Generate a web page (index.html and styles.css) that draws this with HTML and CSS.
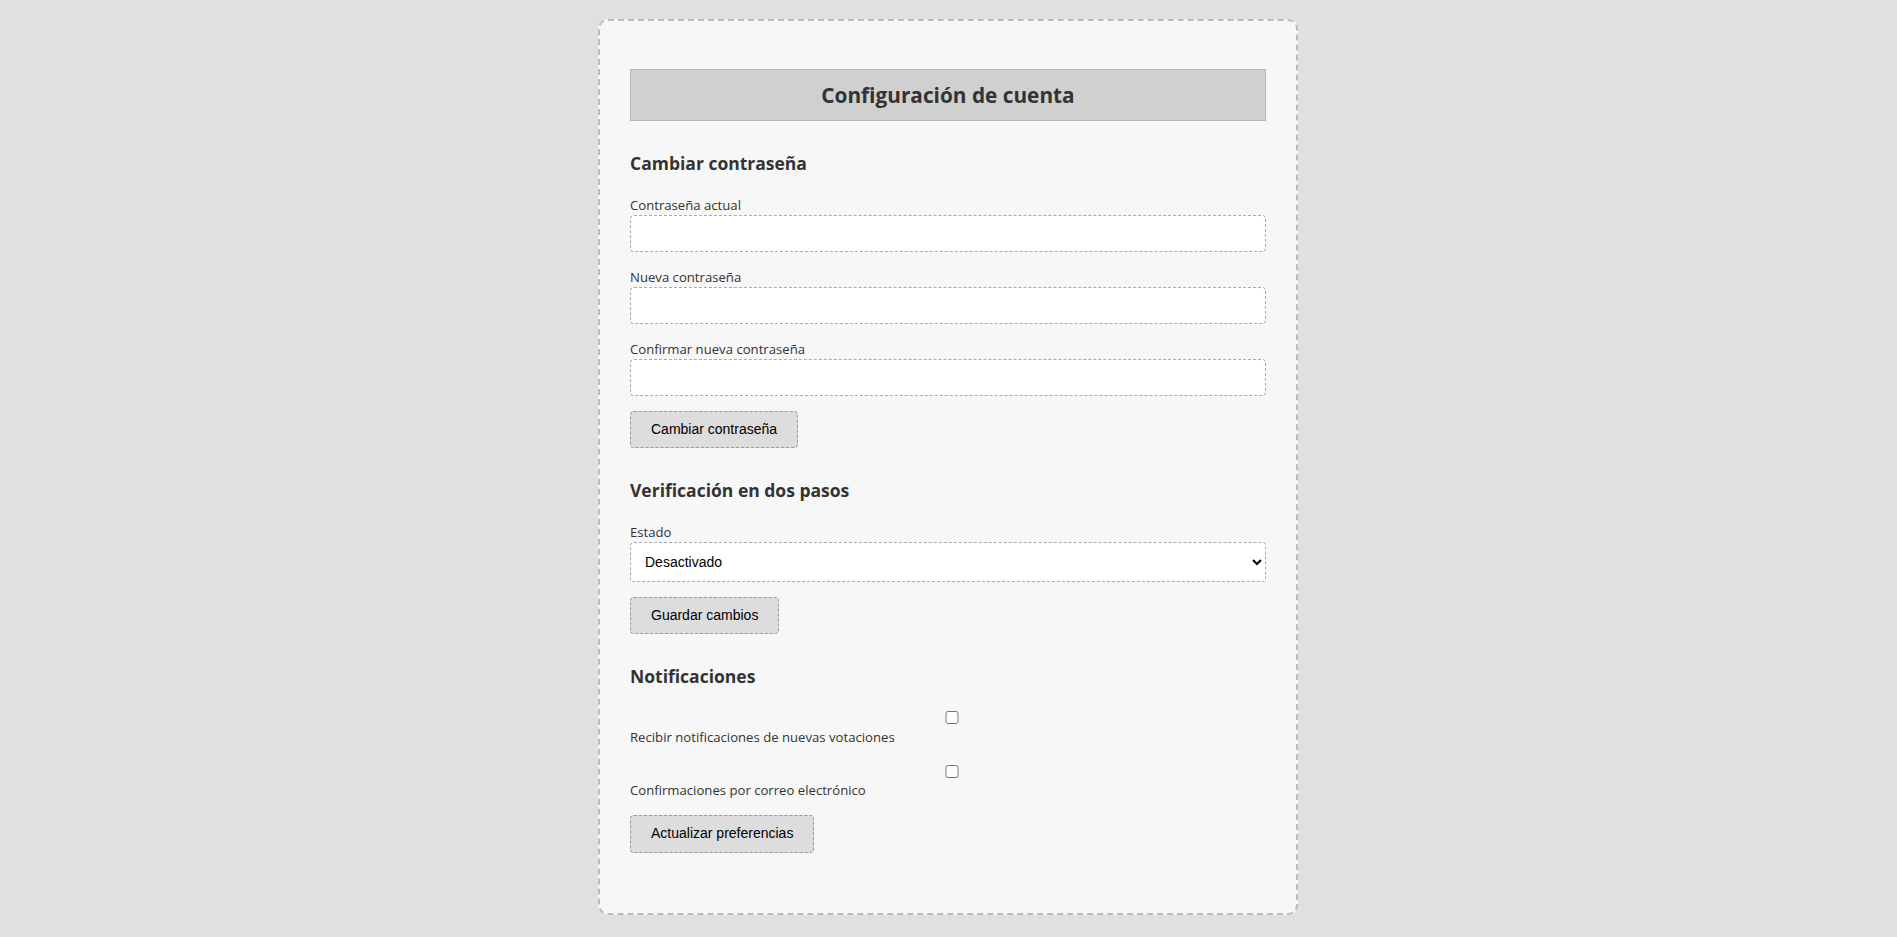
FILE: index.html
```html
<!DOCTYPE html>
<html lang="es">
<head>
<meta charset="utf-8">
<title>Configuración de cuenta</title>
<link rel="stylesheet" href="styles.css">
</head>
<body>
<div class="container">
  <h1 class="title">Configuración de cuenta</h1>

  <section class="section">
    <h3 class="section-title">Cambiar contraseña</h3>
    <form class="form">
      <div class="form-group">
        <label class="label" for="cur">Contraseña actual</label>
        <input class="field" id="cur" type="password">
      </div>
      <div class="form-group">
        <label class="label" for="new">Nueva contraseña</label>
        <input class="field" id="new" type="password">
      </div>
      <div class="form-group">
        <label class="label" for="conf">Confirmar nueva contraseña</label>
        <input class="field" id="conf" type="password">
      </div>
      <button class="btn" type="button">Cambiar contraseña</button>
    </form>
  </section>

  <section class="section">
    <h3 class="section-title">Verificación en dos pasos</h3>
    <form class="form">
      <div class="form-group">
        <label class="label" for="estado">Estado</label>
        <select class="field select" id="estado">
          <option>Desactivado</option>
          <option>Activado</option>
        </select>
      </div>
      <button class="btn" type="button">Guardar cambios</button>
    </form>
  </section>

  <section class="section">
    <h3 class="section-title">Notificaciones</h3>
    <form class="form">
      <div class="form-group">
        <input class="check" id="n1" type="checkbox">
        <label class="label" for="n1">Recibir notificaciones de nuevas votaciones</label>
      </div>
      <div class="form-group">
        <input class="check" id="n2" type="checkbox">
        <label class="label" for="n2">Confirmaciones por correo electrónico</label>
      </div>
      <button class="btn" type="button">Actualizar preferencias</button>
    </form>
  </section>
</div>
</body>
</html>
```

FILE: styles.css
```css
html, body {
  margin: 0;
  padding: 0;
}

body {
  padding-right: 1px;
  background: #e0e0e0;
  font-family: "Open Sans", "Noto Sans", sans-serif;
  color: #333;
}

.container {
  box-sizing: border-box;
  width: 700px;
  margin: 19px auto 22px;
  padding: 30px;
  background: #f7f7f7;
  border: 2px dashed #bbbbbb;
  border-radius: 10px;
}

.title {
  margin: 18px 0 30px;
  padding: 9px 0;
  background: #d0d0d0;
  border: 1px solid #b3b3b3;
  text-align: center;
  font-size: 20.8px;
  line-height: 32px;
  font-weight: 700;
  color: #333;
}

.section {
  margin-bottom: 30px;
}

.section-title {
  margin: 0 0 19px;
  font-size: 17.5px;
  line-height: 25px;
  font-weight: 700;
  color: #333;
}

.form {
  margin: 0;
}

.form-group {
  display: flow-root;
  margin-bottom: 15px;
}

.label {
  display: block;
  font-size: 13.15px;
  line-height: 20px;
  color: #333;
}

.field {
  display: block;
  box-sizing: border-box;
  width: 100%;
  height: 37px;
  margin: 0;
  padding: 10px;
  background: #fff;
  border: 1px dashed #aaaaaa;
  border-radius: 4px;
  font-family: "Liberation Sans", Arial, sans-serif;
  font-size: 14px;
  color: #000;
}

.select {
  height: 40px;
  padding: 0 6px 0 10px;
}

.check {
  display: block;
  width: 100%;
  height: 13px;
  margin: 3px 3px 2.5px 4px;
  padding: 0;
}

.btn {
  display: block;
  box-sizing: border-box;
  height: 37.2px;
  padding: 0 20px;
  background: #dddddd;
  border: 1px dashed #999999;
  border-radius: 4px;
  font-family: "Liberation Sans", Arial, sans-serif;
  font-size: 14px;
  line-height: 15px;
  color: #000;
  cursor: pointer;
}
```
